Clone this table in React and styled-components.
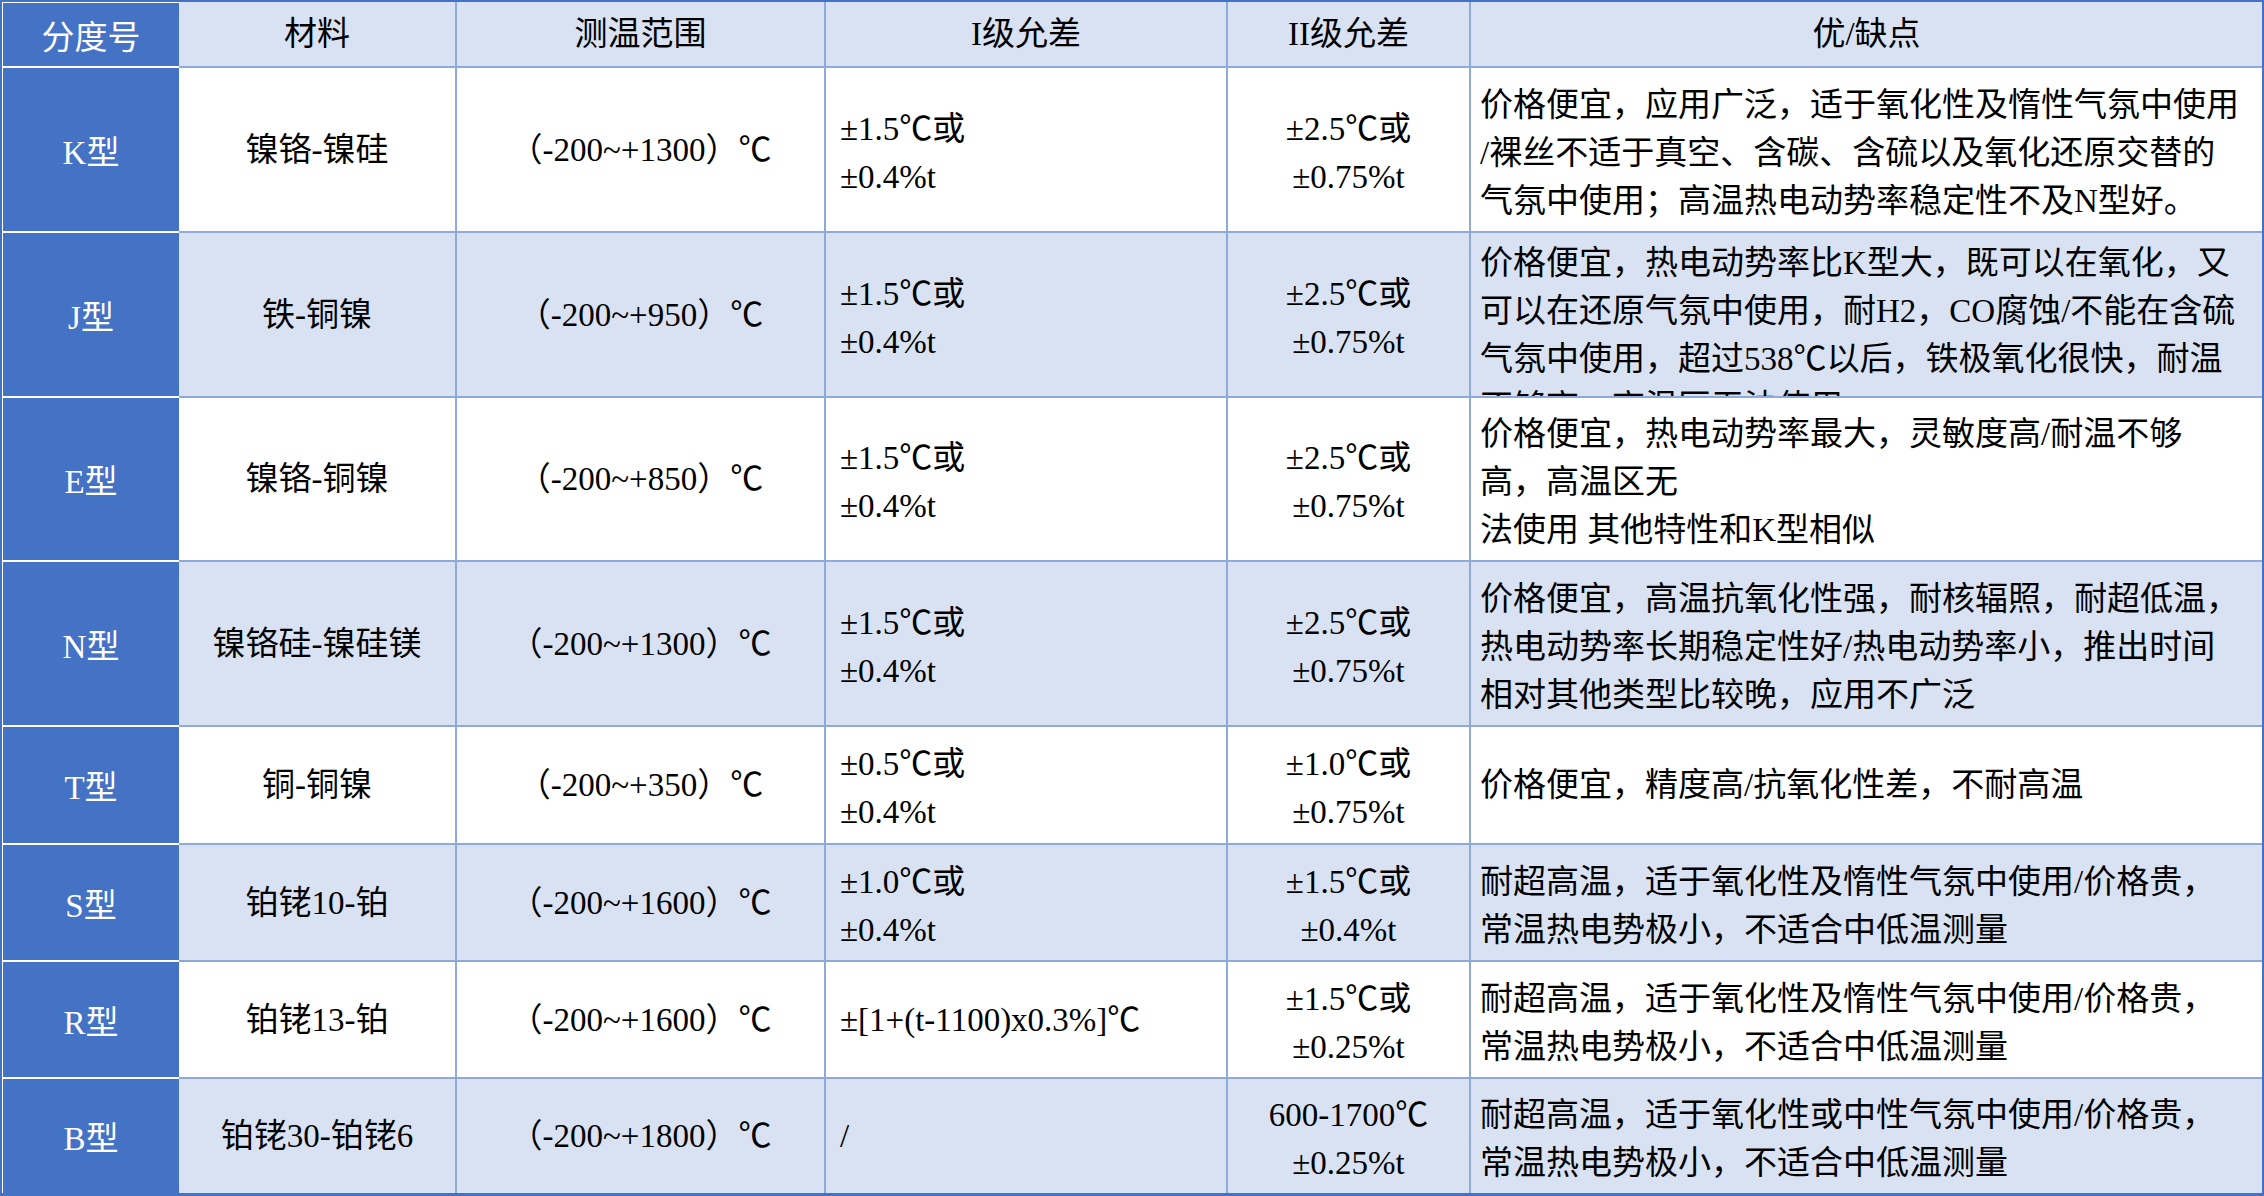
import React from 'react';
import styled, { createGlobalStyle } from 'styled-components';

const GlobalStyle = createGlobalStyle`
  html, body {
    margin: 0;
    padding: 0;
    background: #ffffff;
  }
  body {
    font-family: 'Liberation Serif', 'Noto Sans CJK SC', serif;
  }
`;

const LINE = '#8eaadb';
const DARK = '#4472c4';
const LIGHT = '#d9e2f3';

const Table = styled.div`
  display: grid;
  grid-template-columns: 177px 278px 369px 402px 243px 791px;
  grid-template-rows: ${({ $rows }) => $rows.map((h) => `${h}px`).join(' ')};
  width: 2264px;
  height: 1196px;
  box-sizing: border-box;
  border-style: solid;
  border-color: ${DARK};
  border-width: 2px 2px 3px 2px;
  font-size: 33px;
  color: #000;
`;

const Cell = styled.div`
  box-sizing: border-box;
  display: flex;
  flex-direction: column;
  justify-content: ${({ $clip }) => ($clip ? 'flex-start' : 'center')};
  align-items: ${({ $align }) => ($align === 'left' ? 'flex-start' : 'center')};
  padding-top: ${({ $clip, $multi }) => ($clip ? '6px' : $multi ? '6px' : '0')};
  padding-left: ${({ $pad }) => ($pad ? `${$pad}px` : '0')};
  overflow: hidden;
  line-height: 48px;
  white-space: nowrap;
  background: ${({ $tone }) => ($tone === 'light' ? LIGHT : '#ffffff')};
  border-right: ${({ $lastCol }) => ($lastCol ? 'none' : `2px solid ${LINE}`)};
  border-bottom: ${({ $lastRow }) => ($lastRow ? 'none' : `2px solid ${LINE}`)};
`;

const KeyCell = styled.div`
  box-sizing: border-box;
  display: flex;
  align-items: center;
  justify-content: center;
  background: ${DARK};
  color: #ffffff;
  border-left: 1px solid #ffffff;
  border-top: ${({ $head }) => ($head ? '1px solid #ffffff' : 'none')};
  border-bottom: ${({ $lastRow }) => ($lastRow ? 'none' : '2px solid #ffffff')};
`;

const Line = styled.span`
  display: block;
`;

const heads = ['材料', '测温范围', 'I级允差', 'II级允差', '优/缺点'];

const rows = [
  {
    key: 'K型', h: 165, mat: '镍铬-镍硅', range: '（-200~+1300）℃',
    t1: ['±1.5℃或', '±0.4%t'], t2: ['±2.5℃或', '±0.75%t'],
    note: ['价格便宜，应用广泛，适于氧化性及惰性气氛中使用', '/裸丝不适于真空、含碳、含硫以及氧化还原交替的', '气氛中使用；高温热电动势率稳定性不及N型好。'],
  },
  {
    key: 'J型', h: 165, mat: '铁-铜镍', range: '（-200~+950）℃', clip: true,
    t1: ['±1.5℃或', '±0.4%t'], t2: ['±2.5℃或', '±0.75%t'],
    note: ['价格便宜，热电动势率比K型大，既可以在氧化，又', '可以在还原气氛中使用，耐H2，CO腐蚀/不能在含硫', '气氛中使用，超过538℃以后，铁极氧化很快，耐温', '不够高，高温区无法使用'],
  },
  {
    key: 'E型', h: 164, mat: '镍铬-铜镍', range: '（-200~+850）℃',
    t1: ['±1.5℃或', '±0.4%t'], t2: ['±2.5℃或', '±0.75%t'],
    note: ['价格便宜，热电动势率最大，灵敏度高/耐温不够', '高，高温区无', '法使用 其他特性和K型相似'],
  },
  {
    key: 'N型', h: 165, mat: '镍铬硅-镍硅镁', range: '（-200~+1300）℃',
    t1: ['±1.5℃或', '±0.4%t'], t2: ['±2.5℃或', '±0.75%t'],
    note: ['价格便宜，高温抗氧化性强，耐核辐照，耐超低温，', '热电动势率长期稳定性好/热电动势率小，推出时间', '相对其他类型比较晚，应用不广泛'],
  },
  {
    key: 'T型', h: 118, mat: '铜-铜镍', range: '（-200~+350）℃',
    t1: ['±0.5℃或', '±0.4%t'], t2: ['±1.0℃或', '±0.75%t'],
    note: ['价格便宜，精度高/抗氧化性差，不耐高温'],
  },
  {
    key: 'S型', h: 117, mat: '铂铑10-铂', range: '（-200~+1600）℃',
    t1: ['±1.0℃或', '±0.4%t'], t2: ['±1.5℃或', '±0.4%t'],
    note: ['耐超高温，适于氧化性及惰性气氛中使用/价格贵，', '常温热电势极小，不适合中低温测量'],
  },
  {
    key: 'R型', h: 117, mat: '铂铑13-铂', range: '（-200~+1600）℃',
    t1: ['±[1+(t-1100)x0.3%]℃'], t2: ['±1.5℃或', '±0.25%t'],
    note: ['耐超高温，适于氧化性及惰性气氛中使用/价格贵，', '常温热电势极小，不适合中低温测量'],
  },
  {
    key: 'B型', h: 114, mat: '铂铑30-铂铑6', range: '（-200~+1800）℃',
    t1: ['/'], t2: ['600-1700℃', '±0.25%t'],
    note: ['耐超高温，适于氧化性或中性气氛中使用/价格贵，', '常温热电势极小，不适合中低温测量'],
  },
];

const Lines = ({ items }) => items.map((t, i) => <Line key={i}>{t}</Line>);

export default function App() {
  const heights = [66, ...rows.map((r) => r.h)];
  return (
    <>
      <GlobalStyle />
      <Table $rows={heights}>
        <KeyCell $head>分度号</KeyCell>
        {heads.map((h, i) => (
          <Cell key={h} $tone='light' $lastCol={i === heads.length - 1}>
            {h}
          </Cell>
        ))}
        {rows.map((r, idx) => {
          const tone = idx % 2 ? 'light' : 'white';
          const last = idx === rows.length - 1;
          return (
            <React.Fragment key={r.key}>
              <KeyCell $lastRow={last}>{r.key}</KeyCell>
              <Cell $tone={tone} $lastRow={last}>{r.mat}</Cell>
              <Cell $tone={tone} $lastRow={last}>{r.range}</Cell>
              <Cell $tone={tone} $lastRow={last} $align='left' $pad={14} $multi={r.t1.length > 1}>
                <Lines items={r.t1} />
              </Cell>
              <Cell $tone={tone} $lastRow={last} $multi>
                <Lines items={r.t2} />
              </Cell>
              <Cell
                $tone={tone}
                $lastRow={last}
                $lastCol
                $align='left'
                $pad={9}
                $clip={r.clip}
                $multi={r.note.length > 1}
              >
                <Lines items={r.note} />
              </Cell>
            </React.Fragment>
          );
        })}
      </Table>
    </>
  );
}
